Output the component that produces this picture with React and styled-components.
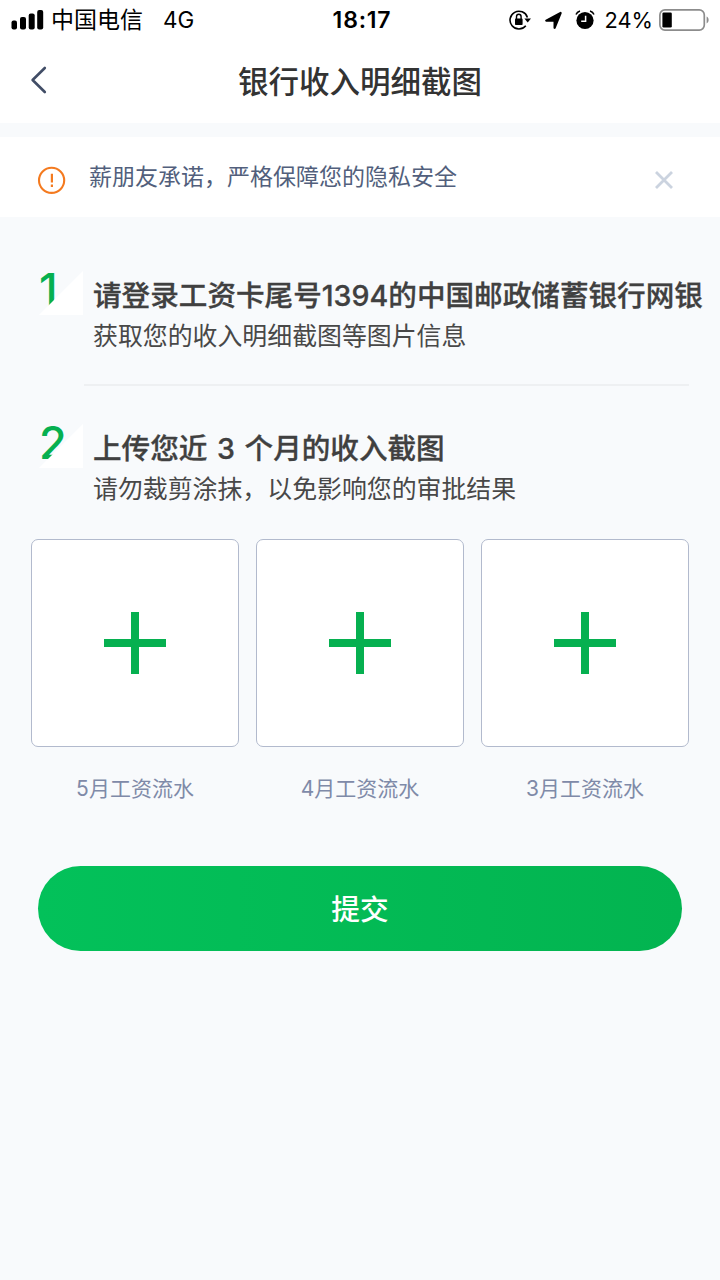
import React from "react";
import styled, { createGlobalStyle } from "styled-components";

const GlobalStyle = createGlobalStyle`
  * { box-sizing: border-box; }
  body {
    margin: 0;
    background: #f8fafc;
    font-family: Inter, "Noto Sans CJK SC", sans-serif;
  }
`;

const Screen = styled.div`
  width: 720px;
  height: 1280px;
  overflow: hidden;
  background: #f8fafc;
`;

const StatusBar = styled.header`
  display: grid;
  grid-template-columns: 1fr auto 1fr;
  align-items: center;
  height: 40px;
  padding: 0 10px 0 11px;
  background: #fff;
  color: #000;
  font-size: 23px;
  line-height: 40px;
`;

const StatusGroup = styled.div`
  display: flex;
  align-items: center;
  justify-content: ${(p) => (p.$end ? "flex-end" : "flex-start")};
  white-space: nowrap;
`;

const Carrier = styled.span`
  margin-left: 7px;
`;

const Network = styled.span`
  margin-left: 20px;
  font-size: 22.5px;
`;

const Clock = styled.span`
  padding-left: 3px;
  font-size: 23px;
  font-weight: 600;
  letter-spacing: 0.8px;
`;

const Percent = styled.span`
  margin: 0 6px 0 10px;
  font-size: 21.8px;
`;

const StatusIcon = styled.svg`
  display: block;
  flex: none;
  margin-left: ${(p) => p.$gap || 0}px;
`;

const NavBar = styled.nav`
  display: grid;
  grid-template-columns: 100px 1fr 100px;
  align-items: center;
  height: 83px;
  background: #fff;
`;

const BackButton = styled.button`
  display: flex;
  padding: 0 0 4px 30px;
  border: 0;
  background: none;
`;

const PageTitle = styled.h1`
  margin: 0;
  text-align: center;
  color: #333;
  font-size: 30.5px;
  font-weight: 500;
  line-height: 83px;
`;

const Notice = styled.section`
  display: flex;
  align-items: center;
  height: 80px;
  margin-top: 14px;
  padding: 0 46px 0 37px;
  background: #fff;
`;

const NoticeText = styled.p`
  flex: 1;
  margin: 0 0 0 23px;
  color: #525f7c;
  font-size: 23px;
  line-height: 34px;
`;

const NoticeIcon = styled.svg`
  display: block;
  margin-top: 6px;
`;

const Step = styled.section`
  display: flex;
  height: ${(p) => p.$height}px;
  padding: ${(p) => p.$top}px 0 0 39px;
`;

const StepBadge = styled.div`
  position: relative;
  flex: none;
  width: 44px;
  height: 44px;
  color: #06b050;
  font-size: 45px;
  font-weight: 500;
  line-height: 37px;

  &::after {
    content: "";
    position: absolute;
    inset: 0;
    background: #fff;
    clip-path: polygon(100% 0, 100% 100%, 0 100%);
  }
`;

const StepBody = styled.div`
  margin: 3px 0 0 10px;
  white-space: nowrap;
`;

const StepTitle = styled.h2`
  margin: 0;
  color: #404040;
  font-size: 28.6px;
  font-weight: 500;
  line-height: 44px;
  word-spacing: 2px;
  -webkit-text-stroke: 0.3px #404040;
`;

const StepHint = styled.p`
  margin: 0;
  color: #484848;
  font-size: 24.9px;
  line-height: 36px;
`;

const Divider = styled.hr`
  height: 2px;
  margin: 0 31px 0 84px;
  border: 0;
  background: #eef0f2;
`;

const Uploads = styled.section`
  display: grid;
  grid-template-columns: repeat(3, 208px);
  column-gap: 17px;
  padding-left: 31px;
`;

const UploadItem = styled.div`
  display: flex;
  flex-direction: column;
  align-items: center;
`;

const UploadBox = styled.button`
  display: flex;
  align-items: center;
  justify-content: center;
  width: 208px;
  height: 208px;
  padding: 0;
  border: 1px solid #b2bacd;
  border-radius: 7px;
  background: #fff;
`;

const UploadLabel = styled.span`
  margin-top: 25px;
  color: #7f8aa8;
  font-size: 21px;
  line-height: 34px;
`;

const SubmitButton = styled.button`
  display: block;
  width: 644px;
  height: 85px;
  margin: 60px 0 0 38px;
  padding: 2px 0 0;
  border: 0;
  border-radius: 43px;
  background: linear-gradient(90deg, #03c15a, #03b450);
  color: #fff;
  font-family: inherit;
  font-size: 28.7px;
  font-weight: 500;
  line-height: 83px;
`;

const steps = [
  {
    number: 1,
    top: 54,
    height: 167,
    title: "请登录工资卡尾号1394的中国邮政储蓄银行网银",
    hint: "获取您的收入明细截图等图片信息",
  },
  {
    number: 2,
    top: 38,
    height: 153,
    title: "上传您近 3 个月的收入截图",
    hint: "请勿裁剪涂抹，以免影响您的审批结果",
  },
];

const months = ["5月工资流水", "4月工资流水", "3月工资流水"];

function StepRow({ step }) {
  return (
    <Step $height={step.height} $top={step.top}>
      <StepBadge>{step.number}</StepBadge>
      <StepBody>
        <StepTitle>{step.title}</StepTitle>
        <StepHint>{step.hint}</StepHint>
      </StepBody>
    </Step>
  );
}

function SignalIcon() {
  return (
    <StatusIcon width="33" height="20" viewBox="0 0 33 20">
      <rect x="0.5" y="10.5" width="5.5" height="9" rx="2" />
      <rect x="9" y="7" width="6" height="12.5" rx="2" />
      <rect x="17.7" y="3.5" width="6" height="16" rx="2" />
      <rect x="26.2" y="0" width="6" height="19.5" rx="2" />
    </StatusIcon>
  );
}

function RotationLockIcon() {
  return (
    <StatusIcon width="23" height="20" viewBox="0 0 23 20">
      <path d="M18.4 7.4A8.9 8.9 0 1 0 16.8 15.8" fill="none" stroke="#000" strokeWidth="1.6" />
      <path d="M15.4 8.4h6.6l-3.3 4.2z" />
      <rect x="6" y="8.6" width="7.6" height="6.4" rx="0.8" />
      <path d="M7.5 9V6.800a2.300 2.600 0 0 1 4.600 0V9" fill="none" stroke="#000" strokeWidth="1.4" />
    </StatusIcon>
  );
}

function LocationIcon() {
  return (
    <StatusIcon $gap={12} width="19" height="19" viewBox="0 0 19 19">
      <path
        d="M16.6 2 10.6 16.800V9.600H2.200z"
        stroke="#000"
        strokeWidth="2.2"
        strokeLinejoin="round"
      />
    </StatusIcon>
  );
}

function AlarmIcon() {
  return (
    <StatusIcon $gap={12} width="20" height="20" viewBox="0 0 20 20">
      <circle cx="10" cy="10.5" r="8.6" />
      <path d="M1 4.600Q2 2 5 1M15 1Q18 2 19 4.600" fill="none" stroke="#000" strokeWidth="1.5" />
      <path d="M10.600 5.800v5.500H6.200" fill="none" stroke="#fff" strokeWidth="1.5" />
    </StatusIcon>
  );
}

function BatteryIcon() {
  return (
    <StatusIcon width="51" height="22" viewBox="0 0 51 22">
      <rect x="0.9" y="0.9" width="44.4" height="20.2" rx="5" fill="none" stroke="#8c8c8c" strokeWidth="1.7" />
      <rect x="3.4" y="3.5" width="9.4" height="15" rx="1.3" />
      <path d="M47.6 7.6c2.7 1.2 2.7 5.6 0 6.8z" fill="#8c8c8c" />
    </StatusIcon>
  );
}

export default function App() {
  return (
    <Screen>
      <GlobalStyle />
      <StatusBar>
        <StatusGroup>
          <SignalIcon />
          <Carrier>中国电信</Carrier>
          <Network>4G</Network>
        </StatusGroup>
        <Clock>18:17</Clock>
        <StatusGroup $end>
          <RotationLockIcon />
          <LocationIcon />
          <AlarmIcon />
          <Percent>24%</Percent>
          <BatteryIcon />
        </StatusGroup>
      </StatusBar>
      <NavBar>
        <BackButton aria-label="返回">
          <svg width="18" height="28" viewBox="0 0 18 28" fill="none" stroke="#414d66" strokeWidth="2.6" strokeLinecap="round" strokeLinejoin="round">
            <path d="M14.8 2 2.6 14l12.2 12" />
          </svg>
        </BackButton>
        <PageTitle>银行收入明细截图</PageTitle>
      </NavBar>
      <Notice>
        <NoticeIcon width="29" height="29" viewBox="0 0 29 29" fill="none">
          <circle cx="14.6" cy="14.3" r="12.6" stroke="#f47a1f" strokeWidth="2.1" />
          <path d="M14.9 7.8v8.8M14.9 18.6v2.3" stroke="#f47a1f" strokeWidth="2.2" />
        </NoticeIcon>
        <NoticeText>薪朋友承诺，严格保障您的隐私安全</NoticeText>
        <NoticeIcon width="20" height="20" viewBox="0 0 20 20" stroke="#cbd3df" strokeWidth="2.8">
          <path d="M2 2l16 16M18 2 2 18" />
        </NoticeIcon>
      </Notice>
      <StepRow step={steps[0]} />
      <Divider />
      <StepRow step={steps[1]} />
      <Uploads>
        {months.map((month) => (
          <UploadItem key={month}>
            <UploadBox aria-label={month}>
              <svg width="62" height="62" viewBox="0 0 62 62" fill="#06b050">
                <path d="M27 0h8v27h27v8H35v27h-8V35H0v-8h27z" />
              </svg>
            </UploadBox>
            <UploadLabel>{month}</UploadLabel>
          </UploadItem>
        ))}
      </Uploads>
      <SubmitButton>提交</SubmitButton>
    </Screen>
  );
}
